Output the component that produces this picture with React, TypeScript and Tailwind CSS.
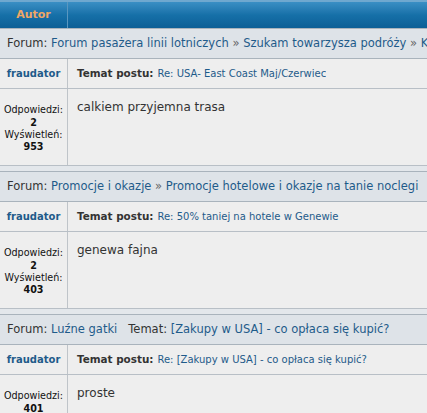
import React from "react";

const F = { fontFamily: '"DejaVu Sans", Verdana, sans-serif' };

type Block = {
  forum: React.ReactNode;
  topic: string;
  body: string;
  stats: [string, string][];
};

const link = "text-[#1e5b8a]";

function ForumRow({ children }: { children: React.ReactNode }) {
  return (
    <div className="h-[30px] bg-[#dee3e8] border-b border-[#a9b3bc] flex items-center pl-[7px] whitespace-nowrap overflow-hidden text-[11.5px] text-[#333]">
      {children}
    </div>
  );
}

function BlockView({ b, last }: { b: Block; last?: boolean }) {
  return (
    <div>
      <ForumRow>{b.forum}</ForumRow>
      <div className="flex h-[30px] bg-[#eeeeee] border-b border-[#b8bfc6]">
        <div className="w-[68px] shrink-0 border-r border-[#bfc4c9] flex items-center justify-center text-[10px] font-bold text-[#1e5b8a]">
          fraudator
        </div>
        <div className="flex items-center pl-[9px] whitespace-nowrap overflow-hidden">
          <span className="font-bold text-[#333] text-[10.4px]">Temat postu:</span>
          <span className={`${link} ml-[4px] text-[10px]`}>{b.topic}</span>
        </div>
      </div>
      <div className="flex h-[77px] bg-[#eeeeee] border-b border-[#b8bfc6]">
        <div className="w-[68px] shrink-0 border-r border-[#bfc4c9] flex flex-col items-center justify-center pt-[4px] text-[9.6px] leading-[12.3px] text-[#111]">
          {b.stats.map(([l, v], i) => (
            <React.Fragment key={i}>
              <div>{l}</div>
              <div className="font-bold">{v}</div>
            </React.Fragment>
          ))}
        </div>
        <div className="pl-[9px] pt-[9px] text-[12px] text-[#333]">{b.body}</div>
      </div>
      {!last && <div className="h-[6px] bg-[#e3e7eb] border-b border-[#a9b3bc]" />}
    </div>
  );
}

const sep = <span className="text-[#666]">&nbsp;»&nbsp;</span>;

const blocks: Block[] = [
  {
    forum: (
      <>
        Forum:&nbsp;<span className={link}>Forum pasażera linii lotniczych</span>
        {sep}
        <span className={link}>Szukam towarzysza podróży</span>
        {sep}
        <span className={link}>Kierunki</span>
      </>
    ),
    topic: "Re: USA- East Coast Maj/Czerwiec",
    body: "calkiem przyjemna trasa",
    stats: [
      ["Odpowiedzi:", "2"],
      ["Wyświetleń:", "953"],
    ],
  },
  {
    forum: (
      <>
        Forum:&nbsp;<span className={link}>Promocje i okazje</span>
        {sep}
        <span className={link}>Promocje hotelowe i okazje na tanie noclegi</span>
      </>
    ),
    topic: "Re: 50% taniej na hotele w Genewie",
    body: "genewa fajna",
    stats: [
      ["Odpowiedzi:", "2"],
      ["Wyświetleń:", "403"],
    ],
  },
  {
    forum: (
      <>
        Forum:&nbsp;<span className={link}>Luźne gatki</span>
        &nbsp;&nbsp;&nbsp;Temat:&nbsp;<span className={link}>[Zakupy w USA] - co opłaca się kupić?</span>
      </>
    ),
    topic: "Re: [Zakupy w USA] - co opłaca się kupić?",
    body: "proste",
    stats: [
      ["Odpowiedzi:", "401"],
      ["Wyświetleń:", "1052"],
    ],
  },
];

export default function App() {
  return (
    <div className="w-[427px] h-[413px] overflow-hidden bg-[#eeeeee]" style={F}>
      <div className="flex h-[29px] border-b border-[#a9b3bc] bg-gradient-to-b from-[#3a8fc4] via-[#1670a8] to-[#0c5f96] border-t-2 border-t-[#6fa8cf]">
        <div className="w-[68px] shrink-0 border-r border-[#5a97c0] flex items-center justify-center text-[11px] font-bold text-[#eea765]">
          Autor
        </div>
        <div className="flex-1" />
      </div>
      {blocks.map((b, i) => (
        <BlockView key={i} b={b} last={i === blocks.length - 1} />
      ))}
    </div>
  );
}
